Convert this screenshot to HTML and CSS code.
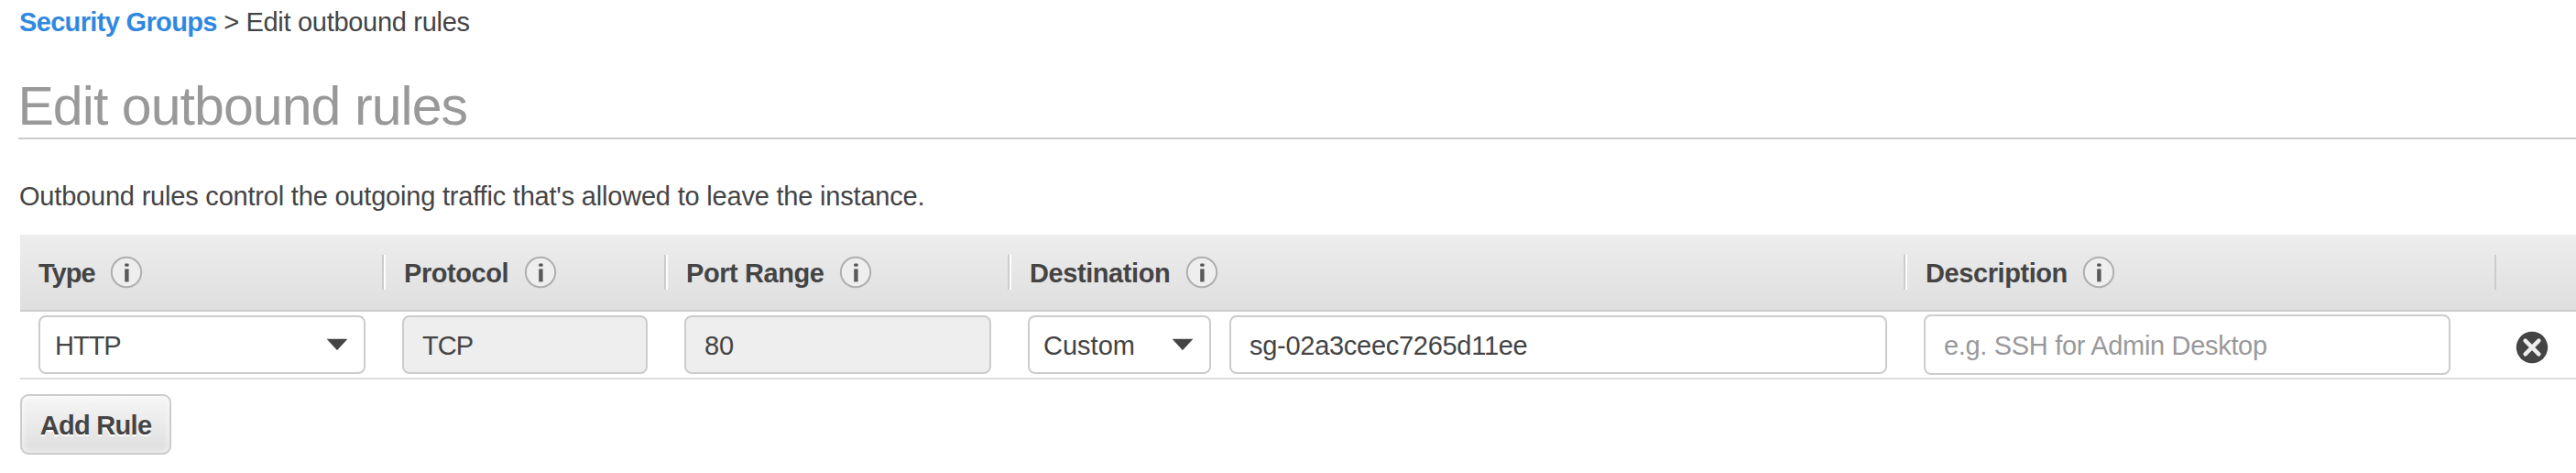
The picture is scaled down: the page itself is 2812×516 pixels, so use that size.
FILE: index.html
```html
<!DOCTYPE html>
<html lang="en">
<head>
<meta charset="utf-8">
<title>Edit outbound rules</title>
<link rel="stylesheet" href="styles.css">
</head>
<body>
<svg class="defs" aria-hidden="true">
  <symbol id="info" viewBox="0 0 36 36">
    <circle cx="18" cy="18" r="16.2" fill="#eee" stroke="#aeaeae" stroke-width="2"/>
    <rect x="16.2" y="8.4" width="4.4" height="3.4" rx="1" fill="#555"/>
    <path d="M16.2 14.4h4.4v14h-4.4z" fill="#5a5a5a"/>
  </symbol>
  <symbol id="caret" viewBox="0 0 24 14">
    <path d="M.6.8h22.8L12.6 12.6q-.6.6-1.2 0z" fill="#444"/>
  </symbol>
</svg>
<nav class="breadcrumb"><a class="breadcrumb-link" href="#">Security Groups</a><span class="breadcrumb-sep">&gt;</span><span class="breadcrumb-current">Edit outbound rules</span></nav>
<h1 class="title">Edit outbound rules</h1>
<p class="intro">Outbound rules control the outgoing traffic that's allowed to leave the instance.</p>
<div class="rules">
  <div class="row head">
    <div class="th th-first"><span class="tight">Type</span><svg class="info"><use href="#info"/></svg></div>
    <div class="th"><span>Protocol</span><svg class="info"><use href="#info"/></svg></div>
    <div class="th"><span>Port Range</span><svg class="info"><use href="#info"/></svg></div>
    <div class="th"><span>Destination</span><svg class="info"><use href="#info"/></svg></div>
    <div class="th th-last"><span>Description</span><svg class="info"><use href="#info"/></svg></div>
  </div>
  <div class="row rule">
    <div class="td td-first"><div class="field select"><span class="tight">HTTP</span><svg class="caret"><use href="#caret"/></svg></div></div>
    <div class="td"><div class="field disabled protocol"><span class="tight">TCP</span></div></div>
    <div class="td"><div class="field disabled port"><span>80</span></div></div>
    <div class="td"><div class="field select scope"><span class="scope-text">Custom</span><svg class="caret"><use href="#caret"/></svg></div><div class="field target"><span>sg-02a3ceec7265d11ee</span></div></div>
    <div class="td"><div class="field description"><span>e.g. SSH for Admin Desktop</span></div></div>
    <div class="td td-remove"><svg class="remove" viewBox="0 0 36 36"><circle cx="18" cy="18" r="17.2" fill="#444"/><path d="M10.6 10.6l14.8 14.8M25.4 10.6L10.6 25.4" stroke="#eee" stroke-width="4.4" stroke-linecap="round"/></svg></div>
  </div>
</div>
<button class="add">Add Rule</button>
</body>
</html>
```
FILE: styles.css
```css
* { box-sizing: border-box; }
body {
  margin: 0;
  height: 516px;
  overflow: hidden;
  background: #fff;
  color: #444;
  font: 29px/32px "Liberation Sans", Arial, sans-serif;
  letter-spacing: -.2px;
  white-space: nowrap;
}
.defs { display: none; }
.breadcrumb { display: flex; gap: 7.5px; padding: 8px 0 0 21px; }
.breadcrumb-link { color: #3088e0; font-weight: bold; letter-spacing: -.66px; text-decoration: none; }
.breadcrumb-current { letter-spacing: -.3px; }
.title {
  margin: 44px 0 0 20px;
  height: 68px;
  border-bottom: 2px solid #ccc;
  color: #999;
  font-size: 59px;
  font-weight: normal;
  letter-spacing: -.93px;
  line-height: 64px;
  text-indent: -.6px;
}
.intro { margin: 46px 0 0 21px; height: 58px; }
.rules { margin-left: 22px; }
.row { display: grid; grid-template-columns: 399px 308px 375px 978px 643px 1fr; }
.head {
  height: 84px;
  padding-top: 22px;
  background: linear-gradient(#ededed, #dfdfdf);
  border-bottom: 2px solid #ccc;
}
.th {
  display: flex;
  align-items: center;
  height: 38px;
  padding-left: 20px;
  border-right: 2px solid #fff;
  box-shadow: inset -2px 0 #ccc;
  font-weight: bold;
  letter-spacing: -.42px;
}
.th span, .field span { padding-top: 2px; }
.th-last { border-right-color: #ccc; box-shadow: none; }
.tight { letter-spacing: -1px; }
.info { width: 36px; height: 36px; margin-left: 16.5px; }
.rule { height: 74px; border-bottom: 2px solid #ddd; }
.td { display: flex; align-items: center; padding-left: 18px; gap: 20px; }
.td-first { padding-left: 20px; }
.field {
  display: flex;
  align-items: center;
  height: 64px;
  padding-left: 20px;
  border: 2px solid #ccc;
  border-radius: 8px;
  background: #fff;
}
.select { width: 357px; padding: 0 17px 0 16px; justify-content: space-between; }
.scope { width: 200px; padding-left: 15px; }
.scope-text { letter-spacing: 0; }
.disabled { background: #eee; }
.protocol { width: 268px; }
.port { width: 335px; }
.target { width: 718px; letter-spacing: -.28px; }
.description { width: 575px; height: 66px; color: #999; letter-spacing: -.32px; }
.caret { width: 24px; height: 14px; }
.td-remove { padding: 6px 0 0 21px; }
.remove { width: 36px; height: 36px; }
.add {
  display: block;
  width: 165px;
  height: 66px;
  margin: 16px 0 0 22px;
  padding: 2px 0 0;
  border: 2px solid #ccc;
  border-radius: 9px;
  background: linear-gradient(#f6f6f6, #dedede);
  box-shadow: inset 0 0 6px 2px rgba(255, 255, 255, .5);
  color: #444;
  font: bold 29px/32px "Liberation Sans", Arial, sans-serif;
  letter-spacing: -.7px;
  text-shadow: 0 2px #fff;
}
```
